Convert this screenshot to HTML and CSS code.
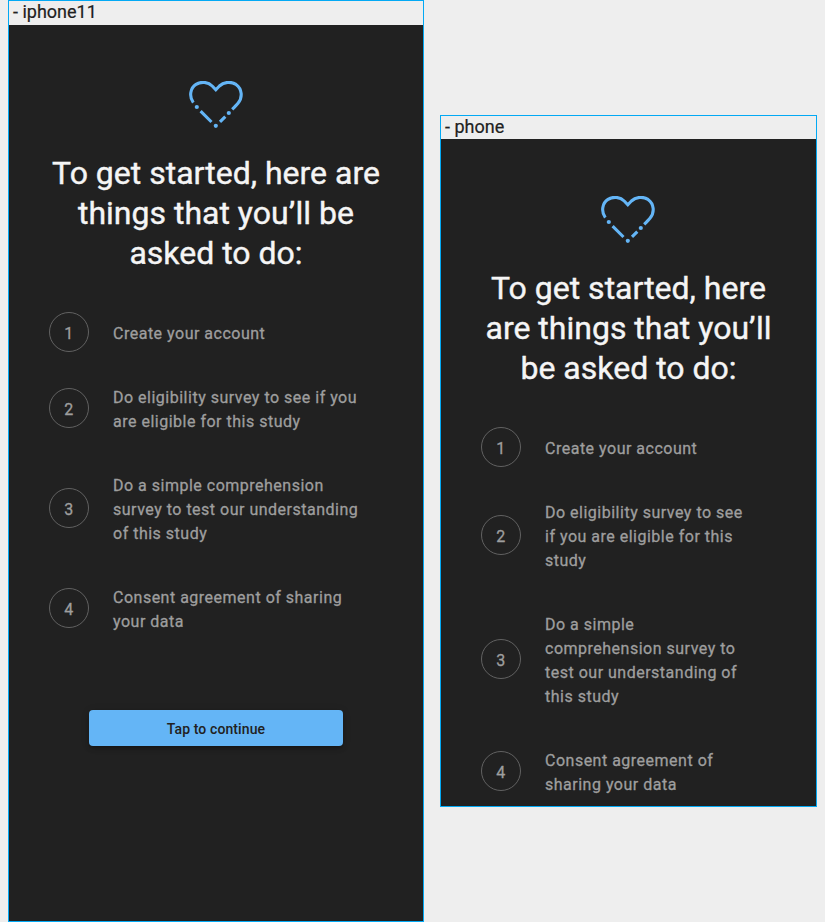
FILE: index.html
```html
<!DOCTYPE html>
<html lang="en">
<head>
<meta charset="utf-8">
<title>Device preview</title>
<link rel="stylesheet" href="styles.css">
</head>
<body>
<svg class="defs" width="0" height="0" aria-hidden="true">
  <symbol id="heart" viewBox="0 0 54 48">
    <path d="M4.3 21.6C-.2 15.4 1.3 7 7 3.4C12 .2 19 .8 23.2 5L26.8 8.8L30.4 5C35 .8 42 .2 47 3.4C53 7.6 54 16.4 49 22.3C47.6 24 45.6 26 43.2 28.4M11.6 30.1L22.5 41M31 40.9L36.3 35.6" fill="none" stroke="#64b5f6" stroke-width="3.1"/>
    <g fill="#64b5f6"><circle cx="7.8" cy="26" r="2.1"/><circle cx="26.8" cy="44.8" r="2.1"/><circle cx="39.8" cy="32" r="2.1"/></g>
  </symbol>
</svg>
<main class="board">
  <section class="frame frame-large">
    <header class="label">- iphone11</header>
    <div class="screen">
      <svg class="heart"><use href="#heart"/></svg>
      <h1>To get started, here are<br>things that you’ll be<br>asked to do:</h1>
      <ol class="steps">
        <li><span class="num">1</span><p>Create your account</p></li>
        <li><span class="num">2</span><p>Do eligibility survey to see if you<br>are eligible for this study</p></li>
        <li><span class="num">3</span><p>Do a simple comprehension<br>survey to test our understanding<br>of this study</p></li>
        <li><span class="num">4</span><p>Consent agreement of sharing<br>your data</p></li>
      </ol>
      <button class="continue">Tap to continue</button>
    </div>
  </section>
  <section class="frame frame-small">
    <header class="label">- phone</header>
    <div class="screen">
      <svg class="heart"><use href="#heart"/></svg>
      <h1>To get started, here<br>are things that you’ll<br>be asked to do:</h1>
      <ol class="steps">
        <li><span class="num">1</span><p>Create your account</p></li>
        <li><span class="num">2</span><p>Do eligibility survey to see<br>if you are eligible for this<br>study</p></li>
        <li><span class="num">3</span><p>Do a simple<br>comprehension survey to<br>test our understanding of<br>this study</p></li>
        <li><span class="num">4</span><p>Consent agreement of<br>sharing your data</p></li>
      </ol>
    </div>
  </section>
</main>
</body>
</html>
```
FILE: styles.css
```css
* { box-sizing: border-box; }
body { margin: 0; background: #eee; font-family: Roboto, sans-serif; overflow: hidden; }
.defs { display: block; height: 0; }
.board { display: flex; align-items: flex-start; gap: 16px; padding-left: 8px; height: 922px; }
.frame { flex: none; display: flex; flex-direction: column; border: 1px solid #03a9f4; overflow: hidden; }
.frame-large { width: 416px; height: 922px; }
.frame-small { width: 377px; height: 692px; margin-top: 115px; }
.label { flex: none; height: 24px; padding-left: 4px; font-size: 18px; line-height: 22px; color: #212121; -webkit-text-stroke: .2px; }
.screen { flex: 1; min-height: 0; overflow: hidden; background: #212121; padding: 56px 40px 0; }
.frame-small .label { height: 23px; }
.frame-small .screen { padding-top: 57px; }
.heart { display: block; width: 54px; height: 48px; margin: 0 auto; }
.frame-small .heart { margin-left: 120px; }
h1 { margin: 24px 0 0; font-size: 32px; line-height: 40px; font-weight: 400; color: #f5f5f5; -webkit-text-stroke: .4px; text-align: center; white-space: nowrap; }
.steps { list-style: none; margin: 47px 0 0; padding: 0; display: flex; flex-direction: column; gap: 40px; }
.steps li { display: flex; align-items: center; gap: 24px; font-size: 16px; line-height: 24px; letter-spacing: .5px; color: #9e9e9e; -webkit-text-stroke: .3px; }
.num { flex: none; width: 40px; height: 40px; margin: -8px 0; border: 1px solid #616161; border-radius: 50%; text-align: center; line-height: 41px; }
.steps p { margin: 0; white-space: nowrap; position: relative; top: 2px; }
.continue { display: block; width: 254px; height: 36px; margin: 78px auto 0; padding: 2px 0 0; border: 0; border-radius: 4px; background: #64b5f6; color: #212121; font: 500 14px/34px Roboto, sans-serif; letter-spacing: .1px; box-shadow: 0 3px 3px -2px rgba(0,0,0,.2), 0 3px 4px rgba(0,0,0,.14), 0 1px 8px rgba(0,0,0,.12); }
```
